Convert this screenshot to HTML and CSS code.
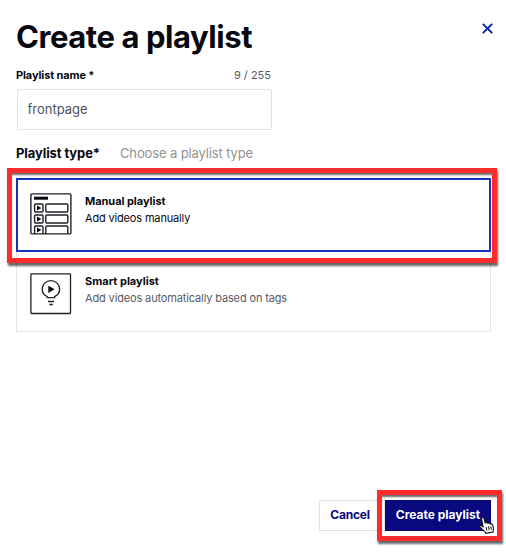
FILE: index.html
```html
<!DOCTYPE html>
<html lang="en">
<head>
<meta charset="utf-8">
<title>Create a playlist</title>
<link rel="stylesheet" href="styles.css">
</head>
<body>
<main class="dialog">
  <header class="header">
    <h1 class="title">Create a playlist</h1>
    <button class="close" aria-label="Close">
      <svg width="11" height="11" viewBox="0 0 11 11"><path d="M.8.8l9.4 9.4M10.2.8L.8 10.2" fill="none" stroke="#001a9e" stroke-width="1.8"/></svg>
    </button>
  </header>
  <section class="field">
    <div class="field-head"><label class="label" for="name">Playlist name *</label><span class="counter">9 / 255</span></div>
    <input class="input" id="name" value="frontpage">
  </section>
  <div class="type-head"><span class="type-label">Playlist type*</span><span class="type-hint">Choose a playlist type</span></div>
  <section class="cards">
    <div class="card selected">
      <svg class="icon" width="42" height="42" viewBox="0 0 42 42" fill="none" stroke="#20222b" stroke-width="1.4">
        <rect x=".9" y=".9" width="40" height="40" rx="1"/>
        <path d="M4 5.2h14" stroke="#08090f" stroke-width="3"/>
        <rect x="4.6" y="11" width="8.4" height="8" rx="1"/><rect x="15.8" y="11" width="22" height="8" rx="1"/>
        <rect x="4.6" y="22" width="8.4" height="8" rx="1"/><rect x="15.8" y="22" width="22" height="8" rx="1"/>
        <path d="M4.6 41v-7q0-1 1-1h6.4q1 0 1 1v7M15.8 41v-7q0-1 1-1h20q1 0 1 1v7"/>
        <path d="M7 12.4l4.400 2.600L7 17.600zM7 23.400l4.400 2.600L7 28.600zM7 34.400l4.400 2.600L7 39.600z" fill="#08090f" stroke="none"/>
      </svg>
      <div class="card-text"><strong class="card-title manual">Manual playlist</strong><span class="card-desc add">Add videos manually</span></div>
      <div class="highlight"></div>
    </div>
    <div class="card smart">
      <svg class="icon" width="42" height="42" viewBox="0 0 42 42" fill="none" stroke="#20222b" stroke-width="1.3">
        <rect x=".9" y=".9" width="39.6" height="39.6" rx=".5"/>
        <path d="M17.200 24.600v-.9C14 22.300 12.200 19.600 12.200 16.300a8.700 8.700 0 0 1 17.400 0c0 3.300-1.800 6-5 7.400v.9z"/>
        <path d="M18.300 12.800l6.300 3.500-6.300 3.600z" fill="#08090f" stroke="none"/>
        <path d="M18 28.500h6M19.300 31.500h3.500"/>
      </svg>
      <div class="card-text"><strong class="card-title smart-title">Smart playlist</strong><span class="card-desc auto">Add videos automatically based on tags</span></div>
    </div>
  </section>
  <footer class="footer">
    <button class="btn cancel"><span>Cancel</span></button>
    <button class="btn create"><span>Create playlist</span>
      <i class="highlight"></i>
      <svg class="cursor" width="16" height="19" viewBox="0 0 16 19"><path d="M4.300 11.500L2.600 3.200C2.200 1.200 4.500.8 5 2.600l1.200 4.300c1-.9 2.200-.5 2.600.4 1-.7 2.100-.3 2.500.7 1.200-.5 2.200.2 2.500 1.400l.6 2.700c.3 1.400-.3 2.500-.4 3.900l-7 1.300c-.6-1.600-2.500-2.600-4-4.200-.9-1-2.400-2-2.100-3.100.5-1.300 2.400-.3 3.400 1.500z" fill="#fff" stroke="#111" stroke-width="1.100"/><path d="M7.200 11l.7 3.600M9.500 10.500l.7 3.600M11.700 10.200l.7 3.400" fill="none" stroke="#111"/></svg>
    </button>
  </footer>
</main>
</body>
</html>
```

FILE: styles.css
```css
* { box-sizing: border-box; }
body { margin: 0; background: #fff; color: #08090f; font-family: Inter, "Liberation Sans", sans-serif; }
.dialog { width: 506px; height: 554px; padding: 0 15px 23px 16px; display: flex; flex-direction: column; overflow: hidden; }
.header { display: flex; justify-content: space-between; height: 66px; }
.title { margin: 17px 0 0; font-size: 31px; line-height: 40px; font-weight: 700; letter-spacing: -.43px; white-space: nowrap; }
.close { width: 17px; height: 17px; margin: 20px -5px 0 0; padding: 3px; border: 0; background: none; display: flex; }
.field { width: 255px; }
.field-head { display: flex; justify-content: space-between; height: 23px; line-height: 18px; font-size: 11px; white-space: nowrap; }
.label { font-weight: 700; letter-spacing: -.13px; }
.counter { color: #555861; }
.input { display: block; width: 255px; height: 41px; margin-left: .5px; padding: 0 10px 2px; border: 1px solid #e2e2e2; border-radius: 2px; font: 13px Inter, sans-serif; color: #50535c; outline: 0; }
.type-head { display: flex; height: 48px; padding-top: 14px; line-height: 19px; font-size: 13px; white-space: nowrap; }
.type-label { width: 104px; font-weight: 700; letter-spacing: -.1px; }
.type-hint { color: #929292; letter-spacing: -.13px; }
.card { position: relative; display: flex; width: 475px; border: 1px solid #e5e5e5; }
.selected { z-index: 1; height: 74px; padding: 13px 12px; border: 2px solid #1735bc; }
.smart { height: 80px; padding: 21px 13px; border-top: 0; }
.icon { flex: none; margin-right: 13px; }
.card-text { display: flex; flex-direction: column; font-size: 11px; line-height: 17px; white-space: nowrap; }
.card-title, .card-desc { align-self: flex-start; }
.manual { letter-spacing: -.05px; }
.add { letter-spacing: -.16px; }
.auto { color: #575a61; letter-spacing: -.14px; }
.highlight { position: absolute; inset: -12px -8px -13px -11px; border: 5px solid #fc2b2c; box-shadow: 1px 3px 2px rgba(0,0,0,.6), inset 0 3px 2px -1px rgba(0,0,0,.6); pointer-events: none; }
.footer { display: flex; justify-content: flex-end; margin-top: auto; }
.btn { position: relative; height: 31px; padding: 0 0 2px; font: 700 12px/27px Inter, sans-serif; white-space: nowrap; border-radius: 0; }
.cancel { width: 66px; border: 1px solid #e2e2e2; background: #fff; color: #08087f; padding-right: 4px; letter-spacing: -.2px; }
.create { width: 106px; border: 0; background: #08087f; color: #fff; }
.create .highlight { inset: -10px -11px -10px -8px; }
.cursor { position: absolute; left: 94px; top: 16px; }
```
